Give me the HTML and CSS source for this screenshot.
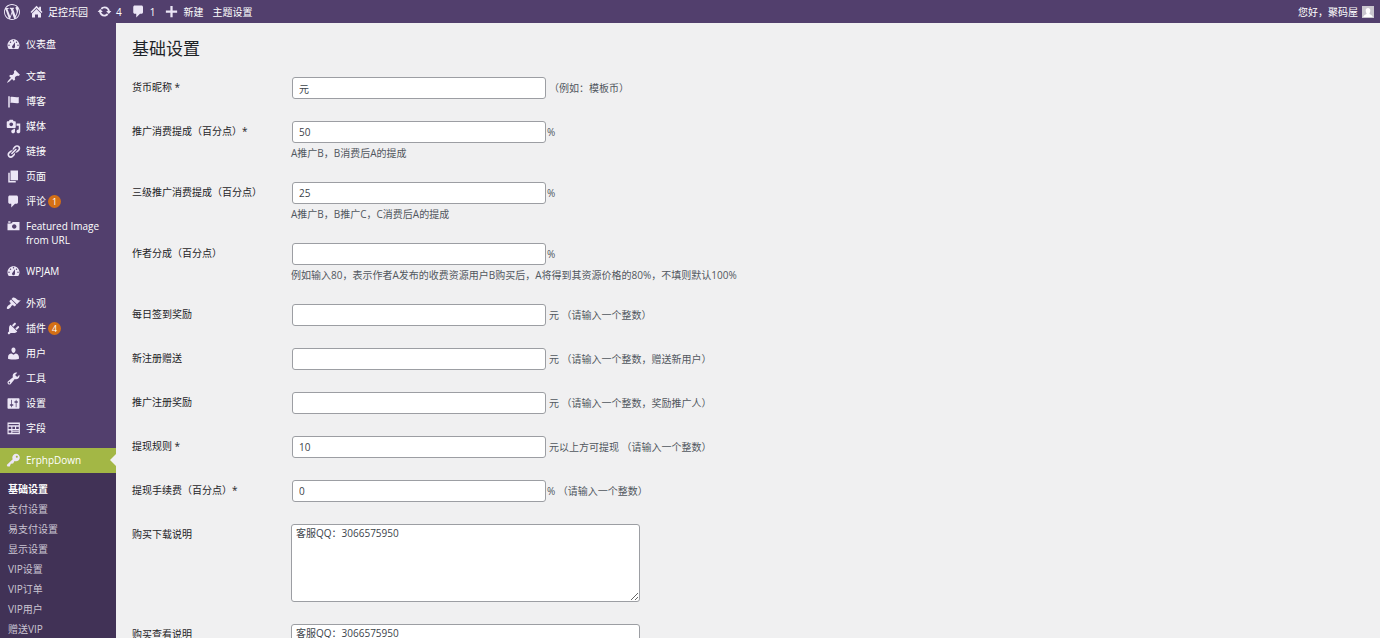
FILE: index.html
```html
<!DOCTYPE html>
<html lang="zh-CN">
<head>
<meta charset="utf-8">
<title>基础设置</title>
<link rel="stylesheet" href="styles.css">
</head>
<body>
<svg class="sprite" aria-hidden="true">
  <symbol id="i-wp" viewBox="0 0 20 20"><path d="M20 10c0-5.51-4.49-10-10-10C4.48 0 0 4.49 0 10c0 5.52 4.48 10 10 10 5.51 0 10-4.48 10-10zM7.78 15.37L4.37 6.22c.55-.02 1.17-.08 1.17-.08.5-.06.44-1.13-.06-1.11 0 0-1.45.11-2.37.11-.18 0-.37 0-.58-.01C4.12 2.69 6.87 1.11 10 1.11c2.33 0 4.45.87 6.05 2.34-.68-.11-1.65.39-1.65 1.58 0 .74.45 1.36.9 2.1.35.61.55 1.36.55 2.46 0 1.49-1.4 5-1.4 5l-3.03-8.37c.54-.02.82-.17.82-.17.5-.05.44-1.25-.06-1.22 0 0-1.44.12-2.38.12-.87 0-2.33-.12-2.33-.12-.5-.03-.56 1.2-.06 1.22l.92.08 1.26 3.41zM17.41 10c.24-.64.74-1.87.43-4.25.7 1.29 1.05 2.71 1.05 4.25 0 3.29-1.73 6.24-4.4 7.78.97-2.59 1.94-5.2 2.92-7.78zM6.1 18.09C3.12 16.65 1.11 13.53 1.11 10c0-1.3.23-2.48.72-3.59C3.25 10.3 4.67 14.2 6.1 18.09zm4.03-6.63l2.58 6.98c-.86.29-1.76.45-2.71.45-.79 0-1.57-.11-2.29-.33.81-2.38 1.62-4.74 2.42-7.1z"/></symbol>
  <symbol id="i-home" viewBox="0 0 20 20"><path d="M16 8.500l2 2-1.500 1.600L10 5.400l-6.500 6.700L2 10.500 10 2.200l3.500 3.600V3.500H16v5zM10 6.800l6 6V18h-4v-4H8v4H4v-5.200z"/></symbol>
  <symbol id="i-update" viewBox="0 0 20 20"><path d="M10.2 3.28c3.53 0 6.43 2.61 6.92 6h2.08l-3.5 4-3.5-4h2.32c-.45-1.97-2.21-3.45-4.32-3.45-1.45 0-2.73.71-3.54 1.78L4.95 5.66C6.23 4.2 8.11 3.28 10.2 3.28zm-.4 13.44c-3.52 0-6.43-2.61-6.92-6H.8l3.5-4c1.17 1.33 2.33 2.67 3.5 4H5.48c.45 1.97 2.21 3.45 4.32 3.45 1.45 0 2.73-.71 3.54-1.78l1.71 1.95c-1.28 1.46-3.15 2.38-5.25 2.38z"/></symbol>
  <symbol id="i-comment" viewBox="0 0 20 20"><path d="M5 2h9c1.1 0 2 .9 2 2v7c0 1.1-.9 2-2 2h-2l-5 5v-5H5c-1.1 0-2-.9-2-2V4c0-1.1.9-2 2-2z"/></symbol>
  <symbol id="i-plus" viewBox="0 0 20 20"><path d="M17.500 8.500v3h-6v6h-3v-6h-6v-3h6v-6h3v6z"/></symbol>
  <symbol id="i-dash" viewBox="0 0 20 20"><path d="M3.760 16h12.480c1.100-1.370 1.760-3.110 1.760-5 0-4.420-3.580-8-8-8s-8 3.580-8 8c0 1.890.66 3.630 1.760 5zM10 4c.55 0 1 .45 1 1s-.45 1-1 1-1-.45-1-1 .45-1 1-1zM6 6c.55 0 1 .45 1 1s-.45 1-1 1-1-.45-1-1 .45-1 1-1zm8 0c.55 0 1 .45 1 1s-.45 1-1 1-1-.45-1-1 .45-1 1-1zm-5.370 5.550L12 7v6c0 1.100-.9 2-2 2s-2-.9-2-2c0-.57.24-1.080.63-1.450zM4 10c.55 0 1 .45 1 1s-.45 1-1 1-1-.45-1-1 .45-1 1-1zm12 0c.55 0 1 .45 1 1s-.45 1-1 1-1-.45-1-1 .45-1 1-1z"/></symbol>
  <symbol id="i-pin" viewBox="0 0 20 20"><path d="M10.440 3.020l1.820-1.820 6.360 6.350-1.830 1.820c-1.050-.68-2.480-.57-3.410.36l-.75.75c-.92.93-1.040 2.350-.35 3.410l-1.830 1.820-2.410-2.410-2.800 2.790c-.42.42-3.380 2.710-3.800 2.290s1.860-3.390 2.280-3.810l2.790-2.790L4.100 9.360l1.830-1.820c1.050.69 2.480.57 3.400-.36l.75-.75c.93-.92 1.050-2.350.36-3.410z"/></symbol>
  <symbol id="i-flag" viewBox="0 0 20 20"><path d="M5 18V3H3v15h2zm1-6V4c3-1 7 1 11 0v8c-3 1.270-8-1-11 0z"/></symbol>
  <symbol id="i-media" viewBox="0 0 20 20"><path d="M13 11V4c0-.55-.45-1-1-1h-1.670L9 1H5L3.670 3H2c-.55 0-1 .45-1 1v7c0 .55.45 1 1 1h10c.55 0 1-.45 1-1zM7 4.500c1.380 0 2.500 1.120 2.500 2.500S8.380 9.500 7 9.500 4.500 8.380 4.500 7 5.620 4.500 7 4.500zM14 6h5v10.500c0 1.380-1.120 2.500-2.500 2.500S14 17.880 14 16.500s1.120-2.500 2.500-2.500c.17 0 .34.02.5.05V9h-3V6zm-4 8.050V13h2v3.500c0 1.380-1.120 2.500-2.500 2.500S7 17.880 7 16.500 8.120 14 9.500 14c.17 0 .34.02.5.05z"/></symbol>
  <symbol id="i-link" viewBox="0 0 20 20"><path d="M17.740 2.760c1.680 1.690 1.680 4.410 0 6.100l-1.530 1.520c-1.120 1.120-2.700 1.470-4.140 1.090l2.620-2.610.76-.77.76-.76c.84-.84.84-2.200 0-3.040-.84-.85-2.200-.85-3.040 0l-.77.76-3.380 3.380c-.37-1.440-.02-3.020 1.100-4.140l1.520-1.530c1.690-1.680 4.420-1.680 6.100 0zM8.590 13.430l5.340-5.340c.42-.42.42-1.100 0-1.520-.44-.43-1.130-.39-1.530 0l-5.330 5.340c-.42.42-.42 1.100 0 1.520.44.43 1.130.39 1.520 0zm-.76 2.290l4.140-4.150c.38 1.440.03 3.020-1.090 4.140l-1.520 1.530c-1.690 1.680-4.410 1.680-6.100 0-1.680-1.680-1.680-4.420 0-6.100l1.530-1.520c1.120-1.120 2.700-1.470 4.140-1.100l-4.140 4.150c-.85.84-.85 2.200 0 3.050.84.84 2.200.84 3.040 0z"/></symbol>
  <symbol id="i-page" viewBox="0 0 20 20"><path d="M6 15V2h10v13H6zm-1 1h8v2H3V5h2v11z"/></symbol>
  <symbol id="i-camera" viewBox="0 0 20 20"><path d="M6 5V3H3v2h3zm12 10V4H9L7 6H2v9h16zm-7-8c1.650 0 3 1.350 3 3s-1.350 3-3 3-3-1.350-3-3 1.350-3 3-3z"/></symbol>
  <symbol id="i-brush" viewBox="0 0 20 20"><path d="M14.480 11.060L7.410 3.990l1.500-1.500c.5-.56 2.300-.47 3.510.32 1.210.8 1.430 1.280 2.910 2.100 1.180.64 2.450 1.260 4.450.85zm-.71.71L6.700 4.700 4.930 6.470c-.39.39-.39 1.020 0 1.410l1.060 1.060c.39.39.39 1.030 0 1.420-.6.6-1.430 1.110-2.210 1.690-.35.26-.7.53-1.010.84C1.430 14.230.4 16.080 1.400 17.070c.99 1 2.840-.03 4.180-1.360.31-.31.58-.66.85-1.020.57-.78 1.080-1.610 1.690-2.210.39-.39 1.020-.39 1.410 0l1.060 1.060c.39.39 1.020.39 1.410 0z"/></symbol>
  <symbol id="i-plug" viewBox="0 0 20 20"><path d="M13.110 4.360L9.870 7.600 8 5.730l3.240-3.240c.35-.34 1.050-.2 1.560.32.52.51.66 1.210.31 1.550zm-8 1.770l.91-1.120 9.010 9.010-1.190.84c-.71.71-2.630 1.160-3.820 1.160H6.140L4.900 17.260c-.59.59-1.540.59-2.120 0-.59-.58-.59-1.530 0-2.120l1.240-1.240v-3.880c0-1.130.4-3.190 1.090-3.890zm7.260 3.970l3.240-3.240c.34-.35 1.040-.21 1.550.31.52.51.66 1.210.31 1.550l-3.240 3.250z"/></symbol>
  <symbol id="i-user" viewBox="0 0 20 20"><path d="M10 9.250c-2.270 0-2.730-3.440-2.730-3.440C7 4.020 7.820 2 9.970 2c2.160 0 2.980 2.020 2.710 3.810 0 0-.41 3.440-2.680 3.440zm0 2.570L12.720 10c2.390 0 4.520 2.330 4.520 4.530v2.490s-3.650 1.130-7.240 1.130c-3.650 0-7.240-1.130-7.240-1.130v-2.490c0-2.250 1.940-4.480 4.470-4.480z"/></symbol>
  <symbol id="i-tool" viewBox="0 0 20 20"><path d="M16.680 9.770c-1.340 1.340-3.300 1.670-4.950.99l-5.410 6.520c-.99.99-2.590.99-3.580 0s-.99-2.590 0-3.570l6.520-5.420c-.68-1.650-.35-3.610.99-4.950 1.280-1.280 3.120-1.620 4.720-1.060l-2.890 2.890 2.820 2.820 2.860-2.870c.53 1.580.18 3.390-1.080 4.650zM3.810 16.210c.4.39 1.040.39 1.430 0 .4-.4.4-1.040 0-1.430-.39-.4-1.030-.4-1.430 0-.39.39-.39 1.030 0 1.430z"/></symbol>
  <symbol id="i-settings" viewBox="0 0 20 20"><path d="M18 16V4c0-.55-.45-1-1-1H3c-.55 0-1 .45-1 1v12c0 .55.45 1 1 1h14c.55 0 1-.45 1-1zM8 11h1c.55 0 1 .45 1 1s-.45 1-1 1H8v1.500c0 .28-.22.5-.5.5s-.5-.22-.5-.5V13H6c-.55 0-1-.45-1-1s.45-1 1-1h1V5.500c0-.28.22-.5.5-.5s.5.22.5.5V11zm5-2h-1c-.55 0-1-.45-1-1s.45-1 1-1h1V5.500c0-.28.22-.5.5-.5s.5.22.5.5V7h1c.55 0 1 .45 1 1s-.45 1-1 1h-1v5.500c0 .28-.22.5-.5.5s-.5-.22-.5-.5V9z"/></symbol>
  <symbol id="i-fields" viewBox="0 0 20 20"><path fill-rule="evenodd" d="M2 2h16.500v15.500H2zM3.500 4v1.500H17V4zM3.500 7.500v3h3.500v-3zm5 0v3h3.500v-3zm5 0v3H17v-3zM3.500 12.500v3h3.500v-3zm5 0v1h8.500v-1zm0 2.200v1h8.500v-1z"/></symbol>
  <symbol id="i-key" viewBox="0 0 20 20"><path d="M16.950 2.580c1.960 1.950 1.960 5.120 0 7.070-1.510 1.510-3.750 1.840-5.590 1.010l-1.870 3.310-2.990.31L5 18H2l-1-2 7.950-7.690c-.92-1.870-.62-4.180.93-5.730 1.950-1.960 5.120-1.960 7.070 0zm-2.510 3.790c.74 0 1.330-.6 1.330-1.340 0-.73-.59-1.330-1.330-1.330-.73 0-1.330.6-1.330 1.330 0 .74.6 1.340 1.330 1.340z"/></symbol>
</svg>

<header class="adminbar">
  <nav class="bar-links" aria-label="工具栏">
    <a class="bar-item logo" href="#" aria-label="WordPress"><svg class="icon"><use href="#i-wp"/></svg></a>
    <a class="bar-item" href="#"><svg class="icon"><use href="#i-home"/></svg>足控乐园</a>
    <a class="bar-item" href="#"><svg class="icon"><use href="#i-update"/></svg>4</a>
    <a class="bar-item" href="#"><svg class="icon"><use href="#i-comment"/></svg>1</a>
    <a class="bar-item" href="#"><svg class="icon"><use href="#i-plus"/></svg>新建</a>
    <a class="bar-item" href="#">主题设置</a>
  </nav>
  <a class="bar-item account" href="#">您好，聚码屋
    <svg class="avatar" viewBox="0 0 12 12"><rect width="12" height="12" fill="#c9c6ce"/><path d="M6 2c1.500 0 2.300 1.100 2.300 2.600S7.400 7.400 7.400 7.800c0 .8 3.100 1 3.300 3.200H1.300c.2-2.200 3.300-2.400 3.300-3.200 0-.4-.9-1.700-.9-3.200S4.500 2 6 2z" fill="#fff"/></svg>
  </a>
</header>

<div class="layout">
  <nav class="sidebar" aria-label="主菜单">
    <ul class="menu">
      <li><a href="#"><svg class="icon"><use href="#i-dash"/></svg>仪表盘</a></li>
    </ul>
    <ul class="menu">
      <li><a href="#"><svg class="icon"><use href="#i-pin"/></svg>文章</a></li>
      <li><a href="#"><svg class="icon"><use href="#i-flag"/></svg>博客</a></li>
      <li><a href="#"><svg class="icon"><use href="#i-media"/></svg>媒体</a></li>
      <li><a href="#"><svg class="icon"><use href="#i-link"/></svg>链接</a></li>
      <li><a href="#"><svg class="icon"><use href="#i-page"/></svg>页面</a></li>
      <li><a href="#"><svg class="icon"><use href="#i-comment"/></svg>评论<span class="count">1</span></a></li>
      <li><a href="#"><svg class="icon"><use href="#i-camera"/></svg>Featured Image from URL</a></li>
    </ul>
    <ul class="menu">
      <li><a href="#"><svg class="icon"><use href="#i-dash"/></svg>WPJAM</a></li>
    </ul>
    <ul class="menu">
      <li><a href="#"><svg class="icon"><use href="#i-brush"/></svg>外观</a></li>
      <li><a href="#"><svg class="icon"><use href="#i-plug"/></svg>插件<span class="count">4</span></a></li>
      <li><a href="#"><svg class="icon"><use href="#i-user"/></svg>用户</a></li>
      <li><a href="#"><svg class="icon"><use href="#i-tool"/></svg>工具</a></li>
      <li><a href="#"><svg class="icon"><use href="#i-settings"/></svg>设置</a></li>
      <li><a href="#"><svg class="icon"><use href="#i-fields"/></svg>字段</a></li>
    </ul>
    <ul class="menu">
      <li><a class="active" href="#"><svg class="icon"><use href="#i-key"/></svg>ErphpDown</a></li>
    </ul>
    <ul class="submenu">
      <li><a class="current" href="#">基础设置</a></li>
      <li><a href="#">支付设置</a></li>
      <li><a href="#">易支付设置</a></li>
      <li><a href="#">显示设置</a></li>
      <li><a href="#">VIP设置</a></li>
      <li><a href="#">VIP订单</a></li>
      <li><a href="#">VIP用户</a></li>
      <li><a href="#">赠送VIP</a></li>
    </ul>
  </nav>

  <main class="content">
    <h1>基础设置</h1>
    <form>
      <div class="row">
        <label for="f1">货币昵称 *</label>
        <div class="field"><input id="f1" type="text" value="元"><span class="unit">（例如：模板币）</span></div>
      </div>
      <div class="row">
        <label for="f2">推广消费提成（百分点）*</label>
        <div class="field"><input id="f2" type="text" value="50"><span>%</span><p>A推广B，B消费后A的提成</p></div>
      </div>
      <div class="row">
        <label for="f3">三级推广消费提成（百分点）</label>
        <div class="field"><input id="f3" type="text" value="25"><span>%</span><p>A推广B，B推广C，C消费后A的提成</p></div>
      </div>
      <div class="row">
        <label for="f4">作者分成（百分点）</label>
        <div class="field"><input id="f4" type="text"><span>%</span><p>例如输入80，表示作者A发布的收费资源用户B购买后，A将得到其资源价格的80%，不填则默认100%</p></div>
      </div>
      <div class="row">
        <label for="f5">每日签到奖励</label>
        <div class="field"><input id="f5" type="text"><span class="unit">元 （请输入一个整数）</span></div>
      </div>
      <div class="row">
        <label for="f6">新注册赠送</label>
        <div class="field"><input id="f6" type="text"><span class="unit">元 （请输入一个整数，赠送新用户）</span></div>
      </div>
      <div class="row">
        <label for="f7">推广注册奖励</label>
        <div class="field"><input id="f7" type="text"><span class="unit">元 （请输入一个整数，奖励推广人）</span></div>
      </div>
      <div class="row">
        <label for="f8">提现规则 *</label>
        <div class="field"><input id="f8" type="text" value="10"><span class="unit">元以上方可提现 （请输入一个整数）</span></div>
      </div>
      <div class="row">
        <label for="f9">提现手续费（百分点）*</label>
        <div class="field"><input id="f9" type="text" value="0"><span>% （请输入一个整数）</span></div>
      </div>
      <div class="row">
        <label for="f10">购买下载说明</label>
        <div class="field"><textarea id="f10">客服QQ：3066575950</textarea></div>
      </div>
      <div class="row">
        <label for="f11">购买查看说明</label>
        <div class="field"><textarea id="f11">客服QQ：3066575950</textarea></div>
      </div>
    </form>
  </main>
</div>
</body>
</html>
```
FILE: styles.css
```css
* {
  box-sizing: border-box;
}

body {
  margin: 0;
  height: 100vh;
  overflow: hidden;
  display: flex;
  flex-direction: column;
  background: #f0f0f1;
  color: #50575e;
  font-family: "Open Sans", "Noto Sans CJK SC", sans-serif;
  font-size: 10px;
  line-height: 14px;
}

a {
  color: inherit;
  text-decoration: none;
}

ul {
  margin: 0;
  padding: 0;
  list-style: none;
}

.sprite {
  display: none;
}

.icon {
  flex: none;
  width: 15px;
  height: 15px;
  fill: #ece6f6;
}

/* Top bar */

.adminbar {
  flex: none;
  display: flex;
  justify-content: space-between;
  height: 23px;
  background: #523f6d;
  color: #fff;
}

.bar-links {
  display: flex;
}

.bar-item {
  display: flex;
  align-items: center;
  gap: 4px;
  padding: 0 5px;
}

.bar-links .bar-item {
  padding: 0 5px 0 4px;
}

.logo .icon {
  width: 16px;
  height: 16px;
}

.avatar {
  width: 12px;
  height: 12px;
}

.bar-item.account {
  padding-right: 6px;
}

/* Side menu */

.layout {
  flex: 1;
  min-height: 0;
  display: flex;
}

.sidebar {
  flex: none;
  width: 116px;
  padding-top: 9px;
  overflow: hidden;
  background: #523f6d;
  color: #fff;
}

.menu + .menu {
  margin-top: 7px;
}

.menu a {
  position: relative;
  display: flex;
  gap: 5px;
  min-height: 25px;
  padding: 5px 10px 5px 6px;
}

.count {
  width: 13px;
  height: 13px;
  margin: 1px 0 0 -3px;
  border-radius: 50%;
  background: #d46f15;
  font-size: 9px;
  line-height: 13px;
  text-align: center;
}

.menu .active {
  background: #a3b745;
}

.active::after {
  content: "";
  position: absolute;
  top: 6px;
  right: 0;
  border: 6px solid transparent;
  border-left-width: 0;
  border-right-color: #f0f0f1;
}

.submenu {
  padding: 6px 0;
  background: #413256;
  color: #cbc5d3;
}

.submenu a {
  display: block;
  padding: 3px 8px;
}

.submenu .current {
  color: #fff;
  font-weight: 700;
}

/* Settings form */

.content {
  flex: 1;
  min-width: 0;
  padding: 14px 16px;
  overflow: hidden;
}

h1 {
  margin: 0 0 6px;
  color: #1d2327;
  font-size: 17px;
  font-weight: 400;
  line-height: 23px;
}

.row {
  display: grid;
  grid-template-columns: 159px 1fr;
  padding: 11px 0;
}

.row label {
  padding-top: 3px;
  color: #1d2327;
}

.field {
  display: flex;
  flex-wrap: wrap;
  align-items: center;
}

input,
textarea {
  border: 1px solid #9c9ea3;
  border-radius: 3px;
  background: #fff;
  color: #3c434a;
  font: inherit;
}

input {
  width: 254px;
  height: 22px;
  margin: 0 1px;
  padding: 0 6px;
}

textarea {
  width: 349px;
  height: 78px;
  padding: 1px 4px;
  resize: vertical;
}

.unit {
  margin-left: 2px;
}

.field p {
  width: 100%;
  margin: 4px 0 0;
  line-height: 13px;
}
```
